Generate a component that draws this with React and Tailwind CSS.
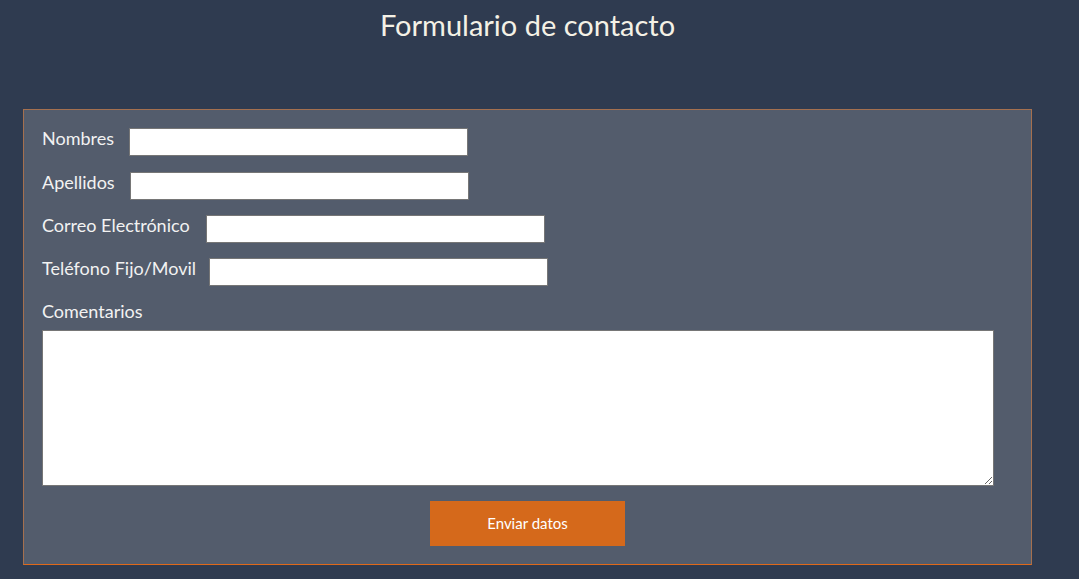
import React from "react";

function Row({ label, gap, mt }) {
  return (
    <div className={`flex items-start h-[28px] ${mt}`}>
      <label className="text-[18px] leading-[20px] text-[#f2f2f2] whitespace-nowrap">{label}</label>
      <input type="text" className={`h-[28px] w-[339px] bg-white border border-[#767676] outline-none ${gap}`} />
    </div>
  );
}

export default function App() {
  return (
    <div className="min-h-[579px] bg-[#2f3b50] overflow-hidden" style={{ fontFamily: "Lato, 'Noto Sans', sans-serif" }}>
      <div className="ml-[23px] w-[1009px]">
        <h1 className="text-center text-[29px] leading-[34px] pt-[8px] text-[#f4f1e6] font-normal">Formulario de contacto</h1>
        <div className="mt-[67px] bg-[#535c6c] border border-[#a5704f] border-b-[#e0691a] px-[18px] pt-[18px] pb-[18px]">
          <div className="flex flex-col">
            <Row label="Nombres" gap="ml-[15px]" mt="" />
            <Row label="Apellidos" gap="ml-[15px]" mt="mt-[16px]" />
            <Row label="Correo Electrónico" gap="ml-[16px]" mt="mt-[15px]" />
            <Row label="Teléfono Fijo/Movil" gap="ml-[13px]" mt="mt-[15px]" />
          </div>
          <div className="mt-[15px] text-[18px] leading-[20px] text-[#f2f2f2]">Comentarios</div>
          <textarea className="mt-[9px] block w-[952px] h-[156px] bg-white border border-[#767676] outline-none" />
          <div className="flex justify-center mt-[15px]">
            <button className="w-[195px] h-[45px] bg-[#d5691b] text-white text-[15px]">Enviar datos</button>
          </div>
        </div>
      </div>
    </div>
  );
}
